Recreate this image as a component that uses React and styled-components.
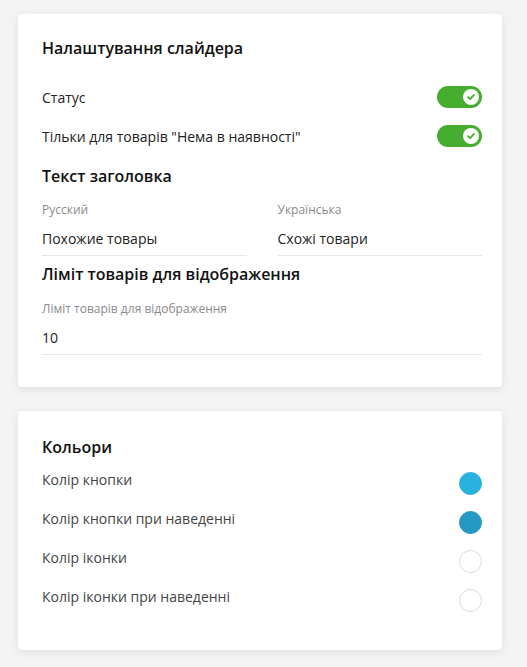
import React, { useState } from "react";
import styled, { createGlobalStyle } from "styled-components";

const GlobalStyle = createGlobalStyle`
  html, body {
    margin: 0;
    padding: 0;
    background: #f4f4f4;
  }
  body {
    font-family: "Open Sans", "Noto Sans", sans-serif;
    color: #333;
  }
`;

const COLORS = [
  { label: "Колір кнопки", value: "#29b1e0" },
  { label: "Колір кнопки при наведенні", value: "#2399c4" },
  { label: "Колір іконки", value: "#ffffff" },
  { label: "Колір іконки при наведенні", value: "#ffffff" },
];

const App = () => {
  const [status, setStatus] = useState(true);
  const [outOfStock, setOutOfStock] = useState(true);
  const [ru, setRu] = useState("Похожие товары");
  const [ua, setUa] = useState("Схожі товари");
  const [limit, setLimit] = useState("10");

  return (
    <>
      <GlobalStyle />
      <Page>
        <Card>
          <Title>Налаштування слайдера</Title>
          <SwitchRow $first>
            <RowLabel>Статус</RowLabel>
            <Toggle on={status} onClick={() => setStatus(!status)} />
          </SwitchRow>
          <SwitchRow>
            <RowLabel>Тільки для товарів "Нема в наявності"</RowLabel>
            <Toggle on={outOfStock} onClick={() => setOutOfStock(!outOfStock)} />
          </SwitchRow>

          <SubTitle>Текст заголовка</SubTitle>
          <FieldGrid>
            <Field>
              <FieldLabel>Русский</FieldLabel>
              <FieldInput value={ru} onChange={(e) => setRu(e.target.value)} />
            </Field>
            <Field>
              <FieldLabel>Українська</FieldLabel>
              <FieldInput value={ua} onChange={(e) => setUa(e.target.value)} />
            </Field>
          </FieldGrid>

          <SubTitle $tight>Ліміт товарів для відображення</SubTitle>
          <Field $wide>
            <FieldLabel>Ліміт товарів для відображення</FieldLabel>
            <FieldInput value={limit} onChange={(e) => setLimit(e.target.value)} />
          </Field>
        </Card>

        <Card $colors>
          <Title>Кольори</Title>
          <ColorList>
            {COLORS.map((c) => (
              <ColorRow key={c.label}>
                <ColorLabel>{c.label}</ColorLabel>
                <Swatch $color={c.value} />
              </ColorRow>
            ))}
          </ColorList>
        </Card>
      </Page>
    </>
  );
};

const Toggle = ({ on, onClick }) => (
  <ToggleTrack $on={on} onClick={onClick}>
    <Knob $on={on}>
      {on && (
        <svg width="10" height="10" viewBox="0 0 10 10">
          <path
            d="M2 5.2 L4.1 7.2 L8 2.9"
            fill="none"
            stroke="#45ae2f"
            strokeWidth="1.8"
            strokeLinecap="round"
            strokeLinejoin="round"
          />
        </svg>
      )}
    </Knob>
  </ToggleTrack>
);

export default App;

const Page = styled.div`
  display: flex;
  flex-direction: column;
  gap: 24px;
  padding: 14px 25px 17px 18px;
`;

const Card = styled.section`
  background: #fff;
  border-radius: 4px;
  box-shadow: 0 2px 10px rgba(0, 0, 0, 0.09);
  padding: ${(p) => (p.$colors ? "26px 20px 38px 24px" : "24px 20px 32px 24px")};
`;

const Title = styled.h2`
  margin: 0;
  font-size: 16px;
  line-height: 20px;
  font-weight: 600;
  color: #111;
`;

const SubTitle = styled.h3`
  margin: ${(p) => (p.$tight ? "8px" : "19px")} 0 0;
  font-size: 16px;
  line-height: 20px;
  font-weight: 600;
  color: #111;
`;

const SwitchRow = styled.div`
  display: flex;
  justify-content: space-between;
  align-items: center;
  height: 22px;
  margin-top: ${(p) => (p.$first ? "28px" : "17px")};
`;

const RowLabel = styled.span`
  font-size: 14px;
  color: #222;
`;

const ToggleTrack = styled.button`
  position: relative;
  width: 45px;
  height: 22px;
  border: none;
  padding: 0;
  border-radius: 11px;
  background: ${(p) => (p.$on ? "#45ae2f" : "#ccc")};
  cursor: pointer;
`;

const Knob = styled.span`
  position: absolute;
  top: 3px;
  left: ${(p) => (p.$on ? "26px" : "3px")};
  width: 16px;
  height: 16px;
  border-radius: 50%;
  background: #fff;
  display: flex;
  align-items: center;
  justify-content: center;
`;

const FieldGrid = styled.div`
  display: grid;
  grid-template-columns: 1fr 1fr;
  column-gap: 31px;
`;

const Field = styled.div`
  display: flex;
  flex-direction: column;
  margin-top: ${(p) => (p.$wide ? "17px" : "16px")};
`;

const FieldLabel = styled.label`
  font-size: 12px;
  line-height: 16px;
  color: #8a8a8a;
`;

const FieldInput = styled.input`
  margin-top: 4px;
  height: 34px;
  box-sizing: border-box;
  border: none;
  border-bottom: 1px solid #e6e6e6;
  padding: 0;
  font-family: inherit;
  font-size: 14px;
  color: #222;
  background: transparent;
  outline: none;
`;

const ColorList = styled.div`
  display: flex;
  flex-direction: column;
  gap: 14px;
  margin-top: 13px;
`;

const ColorRow = styled.div`
  display: flex;
  justify-content: space-between;
  align-items: flex-start;
  height: 25px;
`;

const ColorLabel = styled.span`
  font-size: 14px;
  line-height: 20px;
  color: #444;
`;

const Swatch = styled.span`
  width: 23px;
  height: 23px;
  margin-top: 2px;
  box-sizing: border-box;
  border-radius: 50%;
  background: ${(p) => p.$color};
  border: 1px solid ${(p) => (p.$color === "#ffffff" ? "#dcdcdc" : p.$color)};
`;
